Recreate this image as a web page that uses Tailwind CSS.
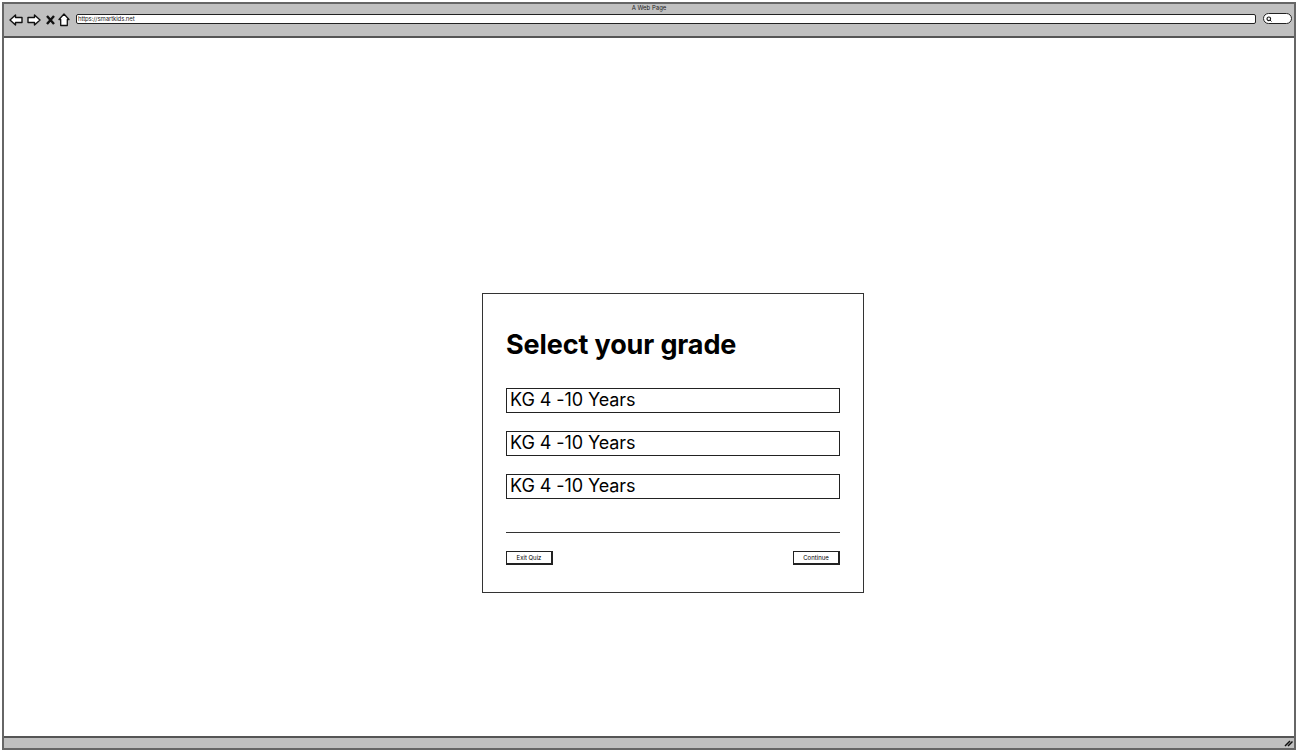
<!DOCTYPE html>
<html>
<head>
<meta charset="utf-8">
<script src="https://cdn.jsdelivr.net/npm/@tailwindcss/browser@4"></script>
</head>
<body class="bg-white">
<div class="w-[1298px] h-[752px] p-[2px] bg-white font-['Inter',sans-serif] text-black overflow-hidden">
  <div class="w-full h-[748px] border-2 border-[#666] flex flex-col">
    <header class="h-[34px] shrink-0 bg-[#c0c0c0] border-b-2 border-[#555] relative flex items-start">
      <div class="flex items-center gap-[4px] ml-[5px] mt-[8px] h-[15px]">
        <svg width="14" height="12" viewBox="0 0 14 12"><path d="M1 6 L6.5 1 V3.5 H13 V8.5 H6.5 V11 Z" fill="#fff" stroke="#111" stroke-width="1.4" stroke-linejoin="round"/></svg>
        <svg width="14" height="12" viewBox="0 0 14 12"><path d="M13 6 L7.5 1 V3.5 H1 V8.5 H7.5 V11 Z" fill="#fff" stroke="#111" stroke-width="1.4" stroke-linejoin="round"/></svg>
        <svg width="9" height="10" viewBox="0 0 9 10" class="ml-[1px]"><path d="M1 1 L8 9 M8 1 L1 9" stroke="#111" stroke-width="2.4"/></svg>
        <svg width="12" height="14" viewBox="0 0 12 14" class="ml-[-1px]"><path d="M6 1 L11 6.5 H9.3 V12.5 H2.7 V6.5 H1 Z" fill="#fff" stroke="#111" stroke-width="1.3" stroke-linejoin="round"/></svg>
      </div>
      <div class="absolute left-0 right-0 top-0 text-center text-[6px] leading-[8px] text-[#222]">A Web Page</div>
      <div class="ml-[6px] mt-[10px] w-[1180px] h-[10px] bg-white border border-[#222] rounded-[2px] text-[6px] tracking-[-0.1px] leading-[8px] pl-[1px] text-[#222]">https://smartkids.net</div>
      <div class="ml-[7px] mt-[9px] w-[29px] h-[11px] bg-white border border-[#222] rounded-full flex items-center pl-[2px]">
        <svg width="6" height="6" viewBox="0 0 6 6"><circle cx="2.8" cy="2.8" r="1.8" fill="none" stroke="#111" stroke-width="1.1"/><path d="M4 4 L5.5 5.5" stroke="#111" stroke-width="1"/></svg>
      </div>
    </header>
    <main class="flex-1 bg-white pl-[478px] pt-[255px]">
      <section class="w-[382px] h-[300px] border border-[#333] pl-[23px] pr-[23px] flex flex-col">
        <h1 class="mt-[33px] h-[35px] text-[27px] tracking-[-0.12px] leading-[35px] font-bold whitespace-nowrap">Select your grade</h1>
        <div class="mt-[26px] flex flex-col gap-[18px]">
          <div class="h-[25px] border border-[#222] pl-[3px] text-[18px] tracking-[-0.08px] leading-[22px]">KG 4 -10 Years</div>
          <div class="h-[25px] border border-[#222] pl-[3px] text-[18px] tracking-[-0.08px] leading-[22px]">KG 4 -10 Years</div>
          <div class="h-[25px] border border-[#222] pl-[3px] text-[18px] tracking-[-0.08px] leading-[22px]">KG 4 -10 Years</div>
        </div>
        <div class="mt-[33px] h-px bg-[#333]"></div>
        <div class="mt-[18px] flex justify-between">
          <button class="w-[47px] h-[14px] bg-white border border-[#222] border-r-2 border-b-2 text-[6px] leading-[10px] text-center">Exit Quiz</button>
          <button class="w-[47px] h-[14px] bg-white border border-[#222] border-r-2 border-b-2 text-[6px] leading-[10px] text-center">Continue</button>
        </div>
      </section>
    </main>
    <footer class="h-[12px] shrink-0 bg-[#c0c0c0] border-t-2 border-[#555] flex justify-end items-center pr-[1px]">
      <svg width="9" height="7" viewBox="0 0 9 7"><path d="M1 6 L6 1 M4 6 L8.5 1.5" stroke="#111" stroke-width="1.5"/></svg>
    </footer>
  </div>
</div>
</body>
</html>
